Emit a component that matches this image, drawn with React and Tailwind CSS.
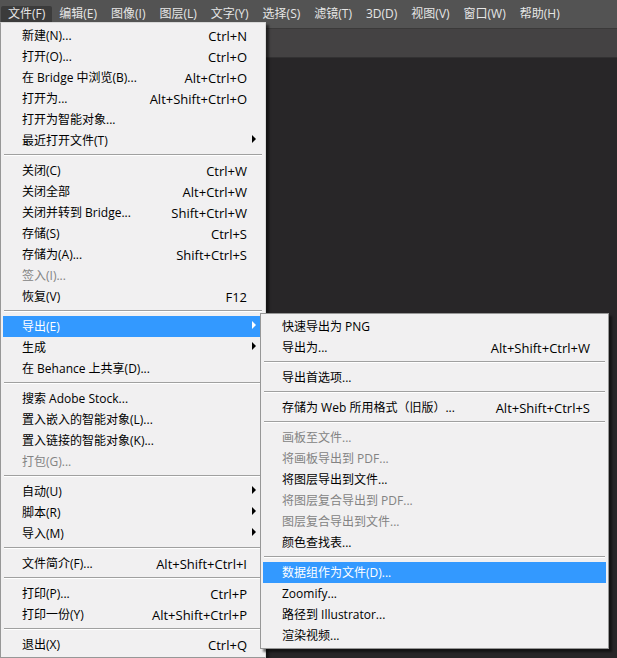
import React, { useState } from "react"
import clsx from "clsx"

// "-" is a separator line
const exportItems = [
    { label: "快速导出为 PNG" },
    { label: "导出为...", keys: "Alt+Shift+Ctrl+W" },
    "-",
    { label: "导出首选项..." },
    "-",
    { label: "存储为 Web 所用格式（旧版）...", keys: "Alt+Shift+Ctrl+S" },
    "-",
    { label: "画板至文件...", disabled: true },
    { label: "将画板导出到 PDF...", disabled: true },
    { label: "将图层导出到文件..." },
    { label: "将图层复合导出到 PDF...", disabled: true },
    { label: "图层复合导出到文件...", disabled: true },
    { label: "颜色查找表..." },
    "-",
    { label: "数据组作为文件(D)...", active: true },
    { label: "Zoomify..." },
    { label: "路径到 Illustrator..." },
    { label: "渲染视频..." },
]

const fileItems = [
    { label: "新建(N)...", keys: "Ctrl+N" },
    { label: "打开(O)...", keys: "Ctrl+O" },
    { label: "在 Bridge 中浏览(B)...", keys: "Alt+Ctrl+O" },
    { label: "打开为...", keys: "Alt+Shift+Ctrl+O" },
    { label: "打开为智能对象..." },
    { label: "最近打开文件(T)", arrow: true },
    "-",
    { label: "关闭(C)", keys: "Ctrl+W" },
    { label: "关闭全部", keys: "Alt+Ctrl+W" },
    { label: "关闭并转到 Bridge...", keys: "Shift+Ctrl+W" },
    { label: "存储(S)", keys: "Ctrl+S" },
    { label: "存储为(A)...", keys: "Shift+Ctrl+S" },
    { label: "签入(I)...", disabled: true },
    { label: "恢复(V)", keys: "F12" },
    "-",
    { label: "导出(E)", arrow: true, active: true, items: exportItems },
    { label: "生成", arrow: true },
    { label: "在 Behance 上共享(D)..." },
    "-",
    { label: "搜索 Adobe Stock..." },
    { label: "置入嵌入的智能对象(L)..." },
    { label: "置入链接的智能对象(K)..." },
    { label: "打包(G)...", disabled: true },
    "-",
    { label: "自动(U)", arrow: true },
    { label: "脚本(R)", arrow: true },
    { label: "导入(M)", arrow: true },
    "-",
    { label: "文件简介(F)...", keys: "Alt+Shift+Ctrl+I" },
    "-",
    { label: "打印(P)...", keys: "Ctrl+P" },
    { label: "打印一份(Y)", keys: "Alt+Shift+Ctrl+P" },
    "-",
    { label: "退出(X)", keys: "Ctrl+Q" },
]

const menus = [
    { label: "文件(F)", items: fileItems },
    { label: "编辑(E)" },
    { label: "图像(I)" },
    { label: "图层(L)" },
    { label: "文字(Y)" },
    { label: "选择(S)" },
    { label: "滤镜(T)" },
    { label: "3D(D)" },
    { label: "视图(V)" },
    { label: "窗口(W)" },
    { label: "帮助(H)" },
]

const Arrow = () => (
    <svg className="mb-1 h-2 w-1" viewBox="0 0 4 8" fill="currentColor" aria-hidden="true">
        <path d="M0 0L4 4L0 8Z" />
    </svg>
)

const MenuItem = ({ item }) => (
    <li className="relative">
        <button
            type="button"
            disabled={item.disabled}
            className={clsx(
                "flex h-[21px] w-full items-center pl-[19px] text-left whitespace-nowrap",
                item.active && "bg-[#3399ff] text-white",
                item.disabled && "text-[#838383]"
            )}
        >
            <span className="flex-1">{item.label}</span>
            <span className="text-[13px]">{item.keys}</span>
            <span className="w-4 pl-[5px]">{item.arrow && <Arrow />}</span>
        </button>
        {item.items && (
            <Menu
                items={item.items}
                className="-top-[3px] left-full -ml-[3px] min-w-[349px] border-[#979797]"
            />
        )}
    </li>
)

const Menu = ({ items, className }) => (
    <ul
        className={clsx(
            "absolute z-10 border bg-[#f1f0f1] p-[2px] text-black shadow-[3px_3px_2px_rgba(0,0,0,0.5)]",
            className
        )}
    >
        {items.map((item, i) =>
            item === "-" ? (
                <li key={i} className="h-[9px] px-px pt-[3px]">
                    <hr className="h-[2px] border-t border-b border-t-[#a0a0a0] border-b-white" />
                </li>
            ) : (
                <MenuItem key={i} item={item} />
            )
        )}
    </ul>
)

const App = () => {
    const [open, setOpen] = useState(0)

    return (
        <div className="h-screen overflow-hidden bg-[#282628] font-['Open_Sans','Noto_Sans_CJK_SC',sans-serif] text-[12px] leading-[16px]">
            {/* Menu bar */}
            <nav className="h-[29px] border-b border-[#3a3939] bg-[#535353] pt-[6px] pl-px text-[#e6e6e6]">
                <ul className="flex">
                    {menus.map((menu, i) => (
                        <li key={menu.label} className="relative">
                            <button
                                type="button"
                                onClick={() => setOpen(i)}
                                className={clsx(
                                    "block h-4 rounded-t-xs px-[7px] whitespace-nowrap",
                                    open === i && "bg-[#3b3b3b]"
                                )}
                            >
                                {menu.label}
                            </button>
                            {open === i && menu.items && (
                                <Menu
                                    items={menu.items}
                                    className="top-full -left-px min-w-[266px] border-t-[#d8d8d8] border-r-[#d8d8d8] border-b-[#979797] border-l-[#979797]"
                                />
                            )}
                        </li>
                    ))}
                </ul>
            </nav>

            {/* Options bar */}
            <div className="h-[29px] border-b border-[#323132] bg-[#444243]" />
        </div>
    )
}

export default App
